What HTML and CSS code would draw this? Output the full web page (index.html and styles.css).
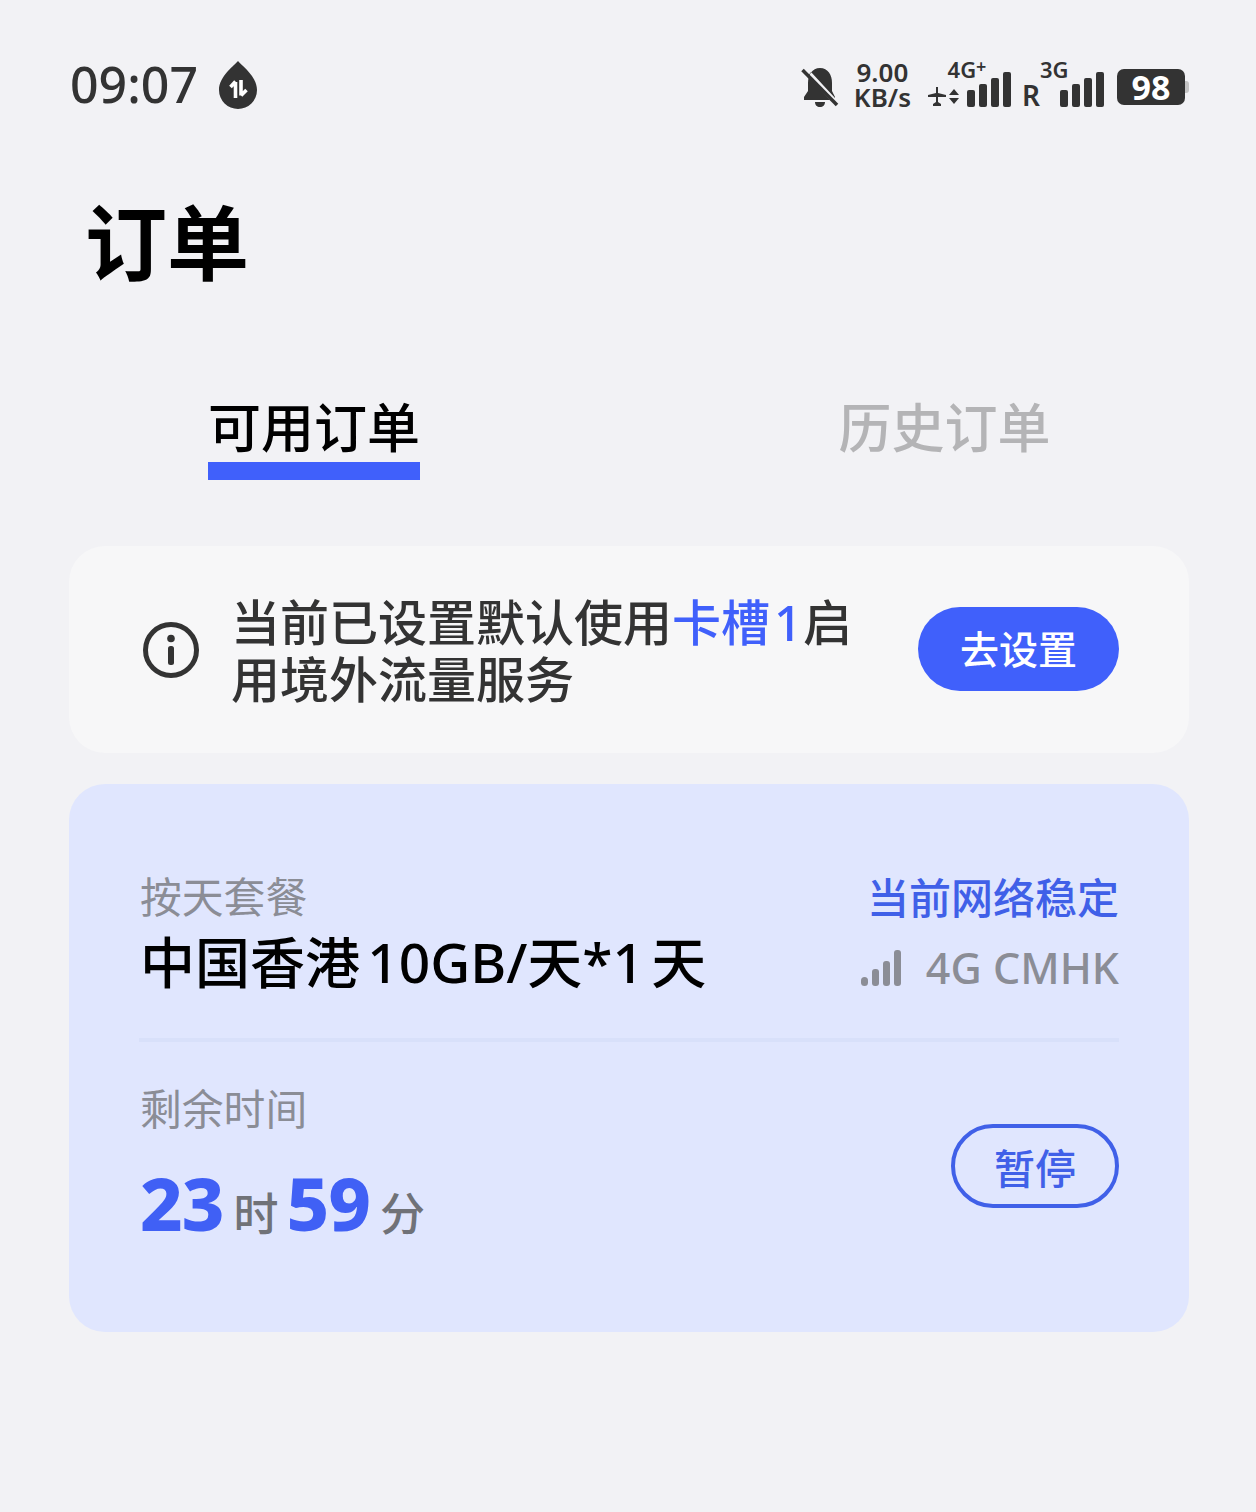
FILE: index.html
```html
<!DOCTYPE html>
<html lang="zh-CN">
<head>
<meta charset="utf-8">
<title>订单</title>
<link rel="stylesheet" href="styles.css">
</head>
<body>
<div class="page">
  <header class="status">
    <div class="status-left">
      <span class="time">09:07</span>
      <svg class="drop" viewBox="0 0 38 48" width="38" height="48"><path d="M19 0 C22 4 38 15 38 29 A19 19 0 0 1 0 29 C0 15 16 4 19 0Z" fill="#333"/><path d="M16.500 37V21M11.500 26L16.500 20.500M22 19V34.500M22 34.500L27.500 29" fill="none" stroke="#fff" stroke-width="3.600"/></svg>
    </div>
    <div class="status-right">
      <svg class="bell" viewBox="0 0 38 40" width="38" height="40"><path d="M19 1C11 1 7 8 7 16V24L3 30V33H29L7 9 10 5 34 31V30L31 24V16C31 8 27 1 19 1ZM14 35C14 38 16 40 19 40S24 38 24 35Z" fill="#333"/><path d="M1.500 3L36 38" stroke="#333" stroke-width="3.500"/></svg>
      <div class="speed"><span>9.00</span><span>KB/s</span></div>
      <div class="net net-a">
        <span class="net-label">4G<sup>+</sup></span>
        <div class="net-row">
          <svg viewBox="0 0 32 20" width="32" height="20"><path d="M8 0H10V6L18 8V10H10V15L13 17V19H5V17L8 15V10H0V8L8 6Z" fill="#333"/><path d="M21 8L26 2 31 8ZM21 11H31L26 17Z" fill="#333"/></svg>
          <svg viewBox="0 0 45 35" width="45" height="35" class="bars"><rect x="0" y="18" width="8" height="17" rx="2"/><rect x="12" y="12" width="8" height="23" rx="2"/><rect x="24" y="6" width="8" height="29" rx="2"/><rect x="36" y="0" width="8" height="35" rx="2"/></svg>
        </div>
      </div>
      <div class="net net-b">
        <span class="roam">R</span>
        <div class="net-col">
          <span class="net-label">3G</span>
          <svg viewBox="0 0 45 35" width="45" height="35" class="bars"><rect x="0" y="18" width="8" height="17" rx="2"/><rect x="12" y="12" width="8" height="23" rx="2"/><rect x="24" y="6" width="8" height="29" rx="2"/><rect x="36" y="0" width="8" height="35" rx="2"/></svg>
        </div>
      </div>
      <div class="battery"><span class="battery-body">98</span><span class="battery-cap"></span></div>
    </div>
  </header>

  <h1 class="title">订单</h1>

  <nav class="tabs">
    <div class="tab tab-active"><span class="tab-text">可用订单</span><span class="tab-line"></span></div>
    <div class="tab tab-muted"><span class="tab-text">历史订单</span></div>
  </nav>

  <section class="notice">
    <svg class="info" viewBox="0 0 56 56" width="56" height="56"><circle cx="28" cy="28" r="25.500" fill="none" stroke="#333" stroke-width="5"/><circle cx="28" cy="16.500" r="3.800" fill="#333"/><rect x="25" y="24" width="6" height="19" rx="2.500" fill="#333"/></svg>
    <p class="notice-text">当前已设置默认使用<span class="blue">卡槽<span class="slot">1</span></span>启用境外流量服务</p>
    <button class="btn-primary">去设置</button>
  </section>

  <section class="plan">
    <div class="plan-top">
      <div class="plan-info">
        <div class="label">按天套餐</div>
        <div class="plan-name">中国香港 10GB/天*1 天</div>
      </div>
      <div class="plan-net">
        <div class="stable">当前网络稳定</div>
        <div class="carrier">
          <svg viewBox="0 0 40 36" width="40" height="36"><rect x="0" y="27" width="7" height="9" rx="3.500"/><rect x="11" y="19" width="7" height="17" rx="3"/><rect x="22" y="11" width="7" height="25" rx="3"/><rect x="33" y="0" width="7" height="36" rx="3"/></svg>
          <span>4G CMHK</span>
        </div>
      </div>
    </div>
    <div class="divider"></div>
    <div class="plan-bottom">
      <div>
        <div class="label">剩余时间</div>
        <div class="remain"><b>23</b><span class="unit">时</span><b>59</b><span class="unit">分</span></div>
      </div>
      <button class="btn-outline">暂停</button>
    </div>
  </section>
</div>
</body>
</html>
```
FILE: styles.css
```css
* { box-sizing: border-box; }
html, body { margin: 0; padding: 0; }
body {
  background: #f2f2f5;
  font-family: "Noto Sans", "Noto Sans CJK SC", sans-serif;
  color: #333;
}
.page { width: 1256px; height: 1512px; padding: 0 67px 0 69px; overflow: hidden; }

.status { display: flex; justify-content: space-between; align-items: center; height: 172px; padding: 0 0 0 1px; }
.status-left { display: flex; align-items: center; gap: 20px; margin-top: -4px; }
.time { font-size: 50px; line-height: 60px; font-weight: 500; color: #333; }
.drop { margin-top: 2px; margin-left: 1px; }
.status-right { display: flex; align-items: center; height: 60px; }
.bell { margin-top: 2px; }
.speed { display: flex; flex-direction: column; align-items: center; margin-left: 15px; margin-top: -2px; font-size: 26px; line-height: 25px; font-weight: 600; color: #333; }
.net { color: #333; }
.net-a { margin-left: 17px; width: 84px; margin-top: -4px; }
.net-label { display: block; font-size: 22px; line-height: 22px; font-weight: 600; text-align: center; }
.net-a .net-label { margin-left: -6px; margin-top: -4px; margin-bottom: 4px; }
.net-label sup { font-size: 18px; line-height: 0; vertical-align: 5px; }
.net-row { display: flex; align-items: flex-end; gap: 7px; margin-top: -12px; }
.bars { fill: #333; display: block; }
.net-b { display: flex; align-items: flex-end; margin-left: 10px; margin-top: -4px; }
.roam { font-size: 28px; line-height: 26px; font-weight: 600; margin-right: 19px; margin-bottom: -1px; }
.net-col { display: flex; flex-direction: column; margin-left: 1px; }
.net-col .net-label { text-align: left; margin-left: -20px; margin-top: -4px; margin-bottom: -8px; }
.battery { display: flex; align-items: center; margin-left: 12px; margin-top: 2px; }
.battery-body { width: 68px; height: 36px; border-radius: 7px; background: #333; color: #fff; font-size: 34px; line-height: 36px; font-weight: 700; text-align: center; }
.battery-cap { width: 4px; height: 12px; border-radius: 0 3px 3px 0; background: #c4c4c4; }

.title { margin: 20px 0 0; padding-left: 16px; font-size: 82px; line-height: 100px; font-weight: 700; color: #000; height: 146px; }

.tabs { display: flex; height: 208px; padding-top: 60px; }
.tab { width: 560px; display: flex; flex-direction: column; align-items: center; }
.tab-text { font-size: 53px; line-height: 60px; font-weight: 500; }
.tab-active { color: #000; }
.tab-muted { color: #b4b4b6; padding-left: 141px; width: 700px; }
.tab-line { width: 212px; height: 18px; background: #4060fb; margin-top: 4px; }

.notice { display: flex; align-items: center; height: 207px; background: #f7f7f8; border-radius: 36px; padding: 0 70px 0 74px; }
.info { flex: none; }
.notice-text { margin: 3px 0 0 32px; width: 640px; font-size: 49px; line-height: 57px; font-weight: 500; color: #333; }
.blue { color: #4060fb; }
.slot { margin: 0 1px 0 4px; }
.btn-primary { flex: none; margin: -2px 0 0 auto; width: 201px; height: 84px; padding: 0 0 4px; border: 0; border-radius: 42px; background: #4060fb; color: #fff; font: inherit; font-size: 39px; font-weight: 500; }

.plan { margin-top: 31px; height: 548px; background: #e0e6fe; border-radius: 36px; padding: 84px 70px 0 71px; }
.plan-top { display: flex; justify-content: space-between; height: 170px; }
.label { font-size: 41.800px; line-height: 58px; color: #8b8d96; }
.plan-name { font-size: 55px; line-height: 76px; font-weight: 500; color: #000; margin-top: -2px; word-spacing: -7px; }
.plan-net { display: flex; flex-direction: column; align-items: flex-end; }
.stable { font-size: 42px; line-height: 60px; font-weight: 500; color: #4060e8; }
.carrier { display: flex; align-items: center; gap: 25px; margin-top: 10px; font-size: 43px; line-height: 60px; font-weight: 500; color: #8b8d96; }
.carrier svg { fill: #8b8d96; }
.divider { height: 4px; background: #d8e0fa; margin-left: -1px; }
.plan-bottom { display: flex; justify-content: space-between; align-items: center; padding-top: 38px; }
.remain { display: flex; align-items: baseline; margin-top: 20px; line-height: 90px; }
.remain b { font-size: 74px; letter-spacing: -1px; color: #4060f5; font-weight: 800; }
.unit { font-size: 45px; font-weight: 500; color: #707278; margin: 0 8px 0 10px; }
.btn-outline { width: 168px; height: 84px; border: 4px solid #4060e8; border-radius: 42px; background: transparent; color: #4060e8; font: inherit; font-size: 41px; font-weight: 500; margin-top: -8px; }
```
